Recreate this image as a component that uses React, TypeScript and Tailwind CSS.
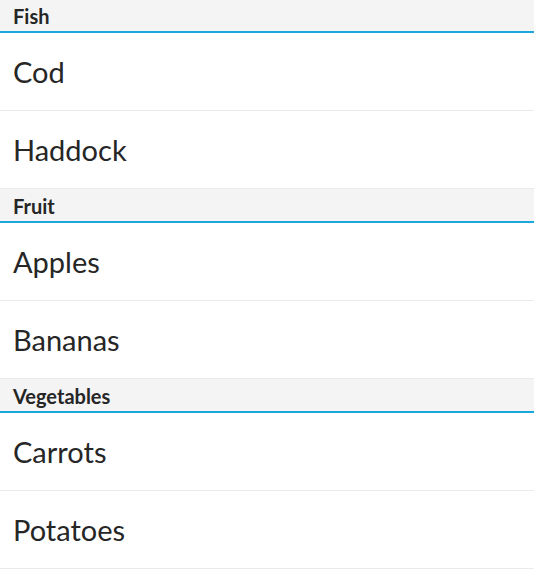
import React from "react";

const groups = [
  { title: "Fish", items: ["Cod", "Haddock"] },
  { title: "Fruit", items: ["Apples", "Bananas"] },
  { title: "Vegetables", items: ["Carrots", "Potatoes"] },
];

export default function App() {
  return (
    <div
      className="w-[534px] h-[583px] bg-white overflow-hidden"
      style={{ fontFamily: "Lato, 'Noto Sans', sans-serif" }}
    >
      <div className="-mt-px">
        {groups.map((g) => (
          <div key={g.title}>
            <div className="h-[34px] bg-[#f4f4f4] border-b-2 border-[#1aa8dc] flex items-center px-[13px] pt-[2px]">
              <span className="text-[20px] font-bold text-[#262626] leading-none">{g.title}</span>
            </div>
            {g.items.map((it) => (
              <div
                key={it}
                className="h-[78px] border-b border-[#ebebeb] flex items-center px-[13px]"
              >
                <span className="text-[29px] text-[#262626] leading-none">{it}</span>
              </div>
            ))}
          </div>
        ))}
      </div>
    </div>
  );
}
